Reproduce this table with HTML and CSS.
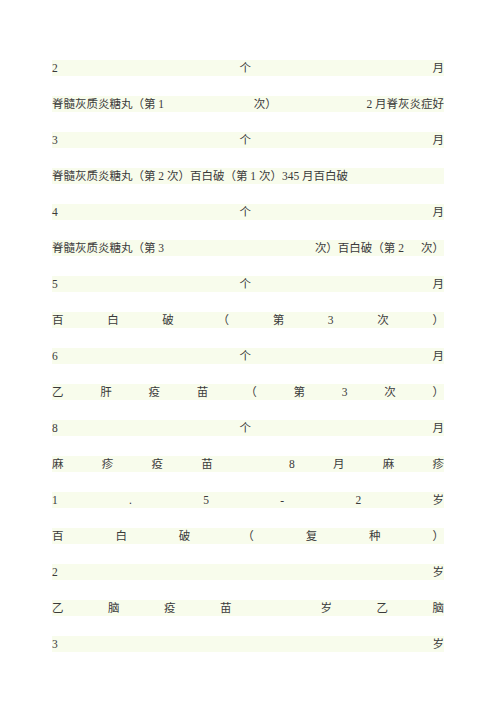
FILE: index.html
```html
<!DOCTYPE html>
<html lang="zh-CN">
<head>
<meta charset="utf-8">
<title>疫苗接种时间表</title>
<link rel="stylesheet" href="styles.css">
</head>
<body>
<div class="page">
  <div class="row spread"><span>2</span><span>个</span><span>月</span></div>
  <div class="row spread"><span>脊髓灰质炎糖丸（第 1</span><span>次）</span><span>2 月脊灰炎症好</span></div>
  <div class="row spread"><span>3</span><span>个</span><span>月</span></div>
  <div class="row"><span>脊髓灰质炎糖丸（第 2 次）百白破（第 1 次）345 月百白破</span></div>
  <div class="row spread"><span>4</span><span>个</span><span>月</span></div>
  <div class="row"><span>脊髓灰质炎糖丸（第 3</span><span class="right-group"><span>次）百白破（第 2</span><span>次）</span></span></div>
  <div class="row spread"><span>5</span><span>个</span><span>月</span></div>
  <div class="row spread"><span>百</span><span>白</span><span>破</span><span>（</span><span>第</span><span>3</span><span>次</span><span>）</span></div>
  <div class="row spread"><span>6</span><span>个</span><span>月</span></div>
  <div class="row spread"><span>乙</span><span>肝</span><span>疫</span><span>苗</span><span>（</span><span>第</span><span>3</span><span>次</span><span>）</span></div>
  <div class="row spread"><span>8</span><span>个</span><span>月</span></div>
  <div class="row spread"><span>麻</span><span>疹</span><span>疫</span><span>苗</span><span class="spacer"></span><span>8</span><span>月</span><span>麻</span><span>疹</span></div>
  <div class="row spread"><span>1</span><span>.</span><span>5</span><span>-</span><span>2</span><span>岁</span></div>
  <div class="row spread"><span>百</span><span>白</span><span>破</span><span>（</span><span>复</span><span>种</span><span>）</span></div>
  <div class="row spread"><span>2</span><span>岁</span></div>
  <div class="row spread"><span>乙</span><span>脑</span><span>疫</span><span>苗</span><span class="spacer"></span><span>岁</span><span>乙</span><span>脑</span></div>
  <div class="row spread"><span>3</span><span>岁</span></div>
</div>
</body>
</html>
```

FILE: styles.css
```css
html, body {
  margin: 0;
  padding: 0;
  background: #ffffff;
}

.page {
  width: 392px;
  margin-left: 52px;
  padding-top: 60px;
  display: flex;
  flex-direction: column;
  gap: 20px;
  font-family: "Liberation Serif", "Noto Sans CJK SC", serif;
  font-size: 11.5px;
  color: #3a3a3a;
}

.row {
  height: 16px;
  line-height: 16px;
  background: #f8fcec;
  display: flex;
  align-items: center;
  white-space: nowrap;
}

.spread {
  justify-content: space-between;
}

.spacer {
  width: 0;
}

.right-group {
  margin-left: auto;
  display: flex;
  gap: 17px;
}
```
